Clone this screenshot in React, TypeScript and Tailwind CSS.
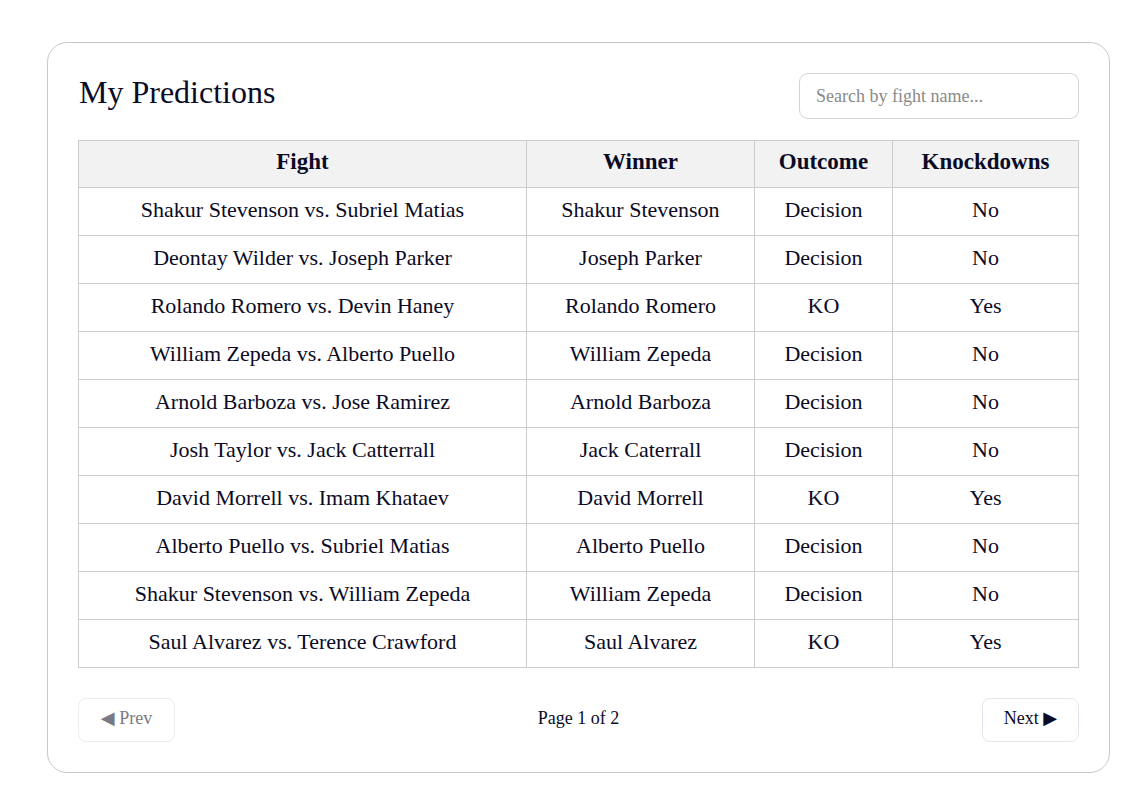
import React, { useState } from "react";

interface Prediction {
  fight: string;
  winner: string;
  outcome: string;
  knockdowns: string;
}

const predictions: Prediction[] = [
  { fight: "Shakur Stevenson vs. Subriel Matias", winner: "Shakur Stevenson", outcome: "Decision", knockdowns: "No" },
  { fight: "Deontay Wilder vs. Joseph Parker", winner: "Joseph Parker", outcome: "Decision", knockdowns: "No" },
  { fight: "Rolando Romero vs. Devin Haney", winner: "Rolando Romero", outcome: "KO", knockdowns: "Yes" },
  { fight: "William Zepeda vs. Alberto Puello", winner: "William Zepeda", outcome: "Decision", knockdowns: "No" },
  { fight: "Arnold Barboza vs. Jose Ramirez", winner: "Arnold Barboza", outcome: "Decision", knockdowns: "No" },
  { fight: "Josh Taylor vs. Jack Catterrall", winner: "Jack Caterrall", outcome: "Decision", knockdowns: "No" },
  { fight: "David Morrell vs. Imam Khataev", winner: "David Morrell", outcome: "KO", knockdowns: "Yes" },
  { fight: "Alberto Puello vs. Subriel Matias", winner: "Alberto Puello", outcome: "Decision", knockdowns: "No" },
  { fight: "Shakur Stevenson vs. William Zepeda", winner: "William Zepeda", outcome: "Decision", knockdowns: "No" },
  { fight: "Saul Alvarez vs. Terence Crawford", winner: "Saul Alvarez", outcome: "KO", knockdowns: "Yes" },
];

const App: React.FC = () => {
  const [search, setSearch] = useState("");

  const rows = predictions.filter((p) =>
    p.fight.toLowerCase().includes(search.toLowerCase())
  );

  return (
    <div
      className="min-h-screen bg-white pt-[42px] pl-[47px] text-[#0b0b26]"
      style={{ fontFamily: '"Liberation Serif", "DejaVu Serif", serif' }}
    >
      <div className="w-[1063px] rounded-[20px] border border-[#c8c8c8] px-[30px] pt-[30px] pb-[30px]">
        <div className="flex items-center justify-between">
          <h1 className="mb-2 pl-px text-[32px] leading-none">My Predictions</h1>
          <input
            value={search}
            onChange={(e) => setSearch(e.target.value)}
            placeholder="Search by fight name..."
            className="h-[46px] w-[280px] rounded-[9px] border border-[#d4d4d4] px-4 text-[18px] outline-none placeholder:text-[#8a8a8a]"
          />
        </div>

        <table className="mt-[21px] w-[1000px] table-fixed border-collapse text-[22px]">
          <colgroup>
            <col className="w-[448px]" />
            <col className="w-[228px]" />
            <col className="w-[138px]" />
            <col className="w-[186px]" />
          </colgroup>
          <thead>
            <tr className="h-[47px] bg-[#f2f2f2] text-[23px]">
              <th className="border border-[#cccccc] pb-1 font-bold">Fight</th>
              <th className="border border-[#cccccc] pb-1 font-bold">Winner</th>
              <th className="border border-[#cccccc] pb-1 font-bold">Outcome</th>
              <th className="border border-[#cccccc] pb-1 font-bold">Knockdowns</th>
            </tr>
          </thead>
          <tbody>
            {rows.map((p) => (
              <tr key={p.fight} className="h-[48px]">
                <td className="border border-[#cccccc] pb-1 text-center">{p.fight}</td>
                <td className="border border-[#cccccc] pb-1 text-center">{p.winner}</td>
                <td className="border border-[#cccccc] pb-1 text-center">{p.outcome}</td>
                <td className="border border-[#cccccc] pb-1 text-center">{p.knockdowns}</td>
              </tr>
            ))}
          </tbody>
        </table>

        <div className="mt-[30px] flex items-center justify-between">
          <button
            disabled
            className="h-[44px] w-[97px] rounded-[8px] border border-[#ececec] pb-1 text-[18px] text-[#7a7a85]"
          >
            ◀ Prev
          </button>
          <span className="pb-1 text-[18px]">Page 1 of 2</span>
          <button className="h-[44px] w-[97px] rounded-[8px] border border-[#e2e6ee] pb-1 text-[18px]">
            Next ▶
          </button>
        </div>
      </div>
    </div>
  );
};

export default App;
